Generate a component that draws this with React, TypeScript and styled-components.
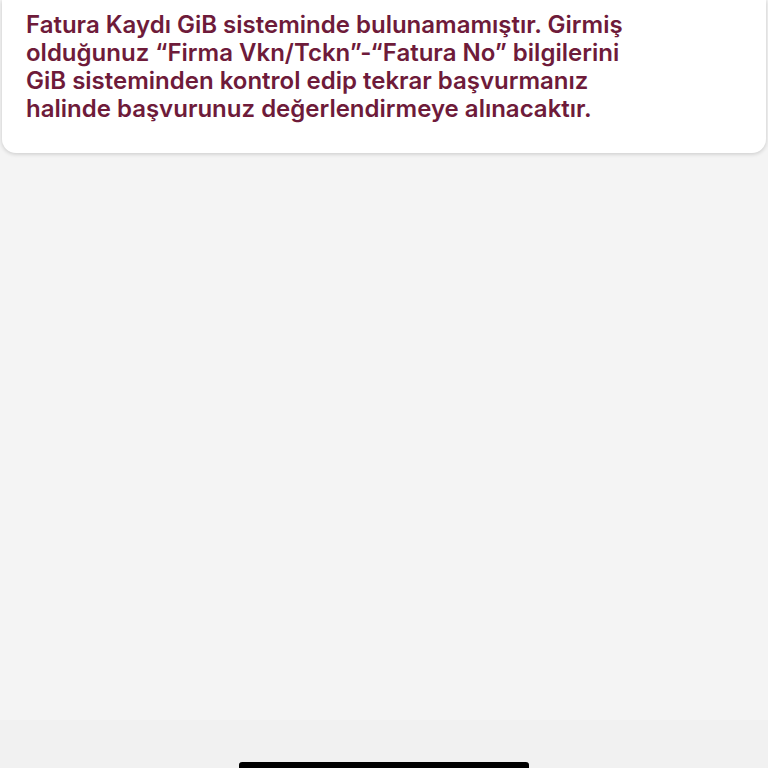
import React from "react";
import styled, { createGlobalStyle } from "styled-components";

const Global = createGlobalStyle`
  html, body { margin: 0; padding: 0; height: 100%; }
  body {
    background: #f4f4f4;
    font-family: Inter, "Noto Sans", "Liberation Sans", sans-serif;
    -webkit-font-smoothing: antialiased;
  }
  #root { height: 100%; }
`;

const Screen = styled.div`
  height: 768px;
  display: flex;
  flex-direction: column;
  background: #f4f4f4;
  overflow: hidden;
`;

const Card = styled.div`
  margin: 0 2px;
  background: #ffffff;
  border-radius: 0 0 14px 14px;
  box-shadow: 0 1px 4px rgba(0, 0, 0, 0.18);
  padding: 11px 24px 30px;
`;

const Message = styled.p`
  margin: 0;
  color: #6e1b3a;
  font-size: 24px;
  font-weight: 600;
  line-height: 28px;
  letter-spacing: 0;
`;

const Line = styled.span`
  display: block;
  white-space: nowrap;
`;

const Spacer = styled.div`
  flex: 1;
`;

const HomeArea = styled.div`
  height: 48px;
  background: #f1f1f1;
  display: flex;
  justify-content: center;
  align-items: flex-end;
`;

const HomeIndicator = styled.div`
  width: 290px;
  height: 6px;
  background: #000;
  border-radius: 3px 3px 0 0;
`;

const lines = [
  "Fatura Kaydı GiB sisteminde bulunamamıştır. Girmiş",
  "olduğunuz “Firma Vkn/Tckn”-“Fatura No” bilgilerini",
  "GiB sisteminden kontrol edip tekrar başvurmanız",
  "halinde başvurunuz değerlendirmeye alınacaktır.",
];

export default function App() {
  return (
    <>
      <Global />
      <Screen>
        <Card>
          <Message>
            {lines.map((l) => (
              <Line key={l}>{l}</Line>
            ))}
          </Message>
        </Card>
        <Spacer />
        <HomeArea>
          <HomeIndicator />
        </HomeArea>
      </Screen>
    </>
  );
}
